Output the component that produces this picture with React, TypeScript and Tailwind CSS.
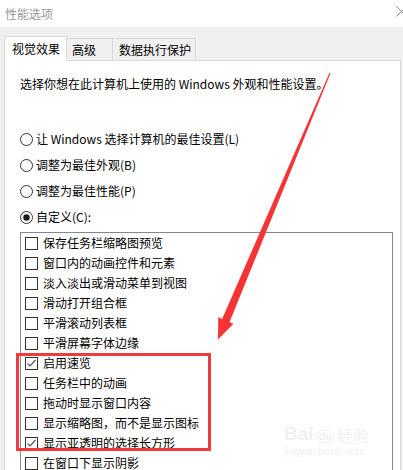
import React from "react";

const items: { label: string; checked: boolean }[] = [
  { label: "保存任务栏缩略图预览", checked: false },
  { label: "窗口内的动画控件和元素", checked: false },
  { label: "淡入淡出或滑动菜单到视图", checked: false },
  { label: "滑动打开组合框", checked: false },
  { label: "平滑滚动列表框", checked: false },
  { label: "平滑屏幕字体边缘", checked: false },
  { label: "启用速览", checked: true },
  { label: "任务栏中的动画", checked: false },
  { label: "拖动时显示窗口内容", checked: false },
  { label: "显示缩略图，而不是显示图标", checked: false },
  { label: "显示亚透明的选择长方形", checked: true },
  { label: "在窗口下显示阴影", checked: false },
];

const radios = [
  { label: "让 Windows 选择计算机的最佳设置(L)", on: false },
  { label: "调整为最佳外观(B)", on: false },
  { label: "调整为最佳性能(P)", on: false },
  { label: "自定义(C):", on: true },
];

function Radio({ on }: { on: boolean }) {
  return (
    <svg width="13" height="13" viewBox="0 0 13 13" className="shrink-0">
      <circle cx="6.5" cy="6.5" r="6" fill="#fff" stroke="#333" strokeWidth="1" />
      {on && <circle cx="6.5" cy="6.5" r="3.2" fill="#1a1a1a" />}
    </svg>
  );
}

function Check({ on }: { on: boolean }) {
  return (
    <svg width="13" height="13" viewBox="0 0 13 13" className="shrink-0">
      <rect x="0.5" y="0.5" width="12" height="12" fill="#fff" stroke="#333" strokeWidth="1" />
      {on && (
        <polyline points="2.5,6.5 5,9 10.5,3" fill="none" stroke="#555" strokeWidth="1.2" />
      )}
    </svg>
  );
}

export default function App() {
  return (
    <div className="relative w-[403px] h-[470px] overflow-hidden bg-white text-[12px] text-black font-['Noto_Sans_CJK_SC','Microsoft_YaHei',sans-serif] flex flex-col">
      {/* title bar */}
      <div className="h-[27px] shrink-0 flex items-center pl-[5px] text-[#9a9a9a] leading-none">
        性能选项
      </div>
      <svg className="absolute left-[396px] top-[6px]" width="11" height="11" viewBox="0 0 11 11">
        <line x1="0.5" y1="0.5" x2="10.5" y2="10.5" stroke="#888" strokeWidth="1" />
        <line x1="10.5" y1="0.5" x2="0.5" y2="10.5" stroke="#888" strokeWidth="1" />
      </svg>

      {/* body */}
      <div className="flex-1 bg-[#f0f0f0] pl-[4px] pr-[2px] flex flex-col">
        {/* tabs */}
        <div className="h-[33px] shrink-0 flex items-end">
          <div className="relative z-10 -mb-px w-[63px] h-[25px] bg-white border border-b-0 border-[#d9d9d9] flex items-center pl-[7px] leading-none">
            视觉效果
          </div>
          <div className="w-[46px] h-[22px] border-t border-r border-[#d9d9d9] flex items-center pl-[5px] leading-none">
            高级
          </div>
          <div className="w-[83px] h-[22px] border-t border-r border-[#d9d9d9] flex items-center pl-[6px] leading-none">
            数据执行保护
          </div>
        </div>
        {/* panel */}
        <div className="flex-1 bg-white border border-b-0 border-[#d9d9d9] pl-[15px] flex flex-col">
          <div className="mt-[15px] h-[16px] leading-[16px] whitespace-nowrap">
            选择你想在此计算机上使用的 Windows 外观和性能设置。
          </div>
          <div className="mt-[34px] flex flex-col">
            {radios.map((r) => (
              <div key={r.label} className="h-[26px] flex items-center gap-[3px] whitespace-nowrap">
                <Radio on={r.on} />
                <span className="leading-none">{r.label}</span>
              </div>
            ))}
          </div>
          <div className="mt-[2px] w-[373px] border border-b-0 border-[#828790] flex-1 pl-[4px] flex flex-col">
            {items.map((it) => (
              <div key={it.label} className="h-[20px] shrink-0 flex items-center gap-[5px] whitespace-nowrap">
                <Check on={it.checked} />
                <span className="leading-none">{it.label}</span>
              </div>
            ))}
          </div>
        </div>
      </div>

      {/* watermark */}
      <div className="absolute left-[284px] top-[424px] flex flex-col items-start text-[#f1f1f1] leading-none select-none">
        <div className="flex items-end gap-[2px] font-['Liberation_Sans',sans-serif]">
          <span className="text-[19px] font-bold">Bai</span>
          <span className="text-[11px] font-bold border border-[#f1f1f1] rounded-full px-[2px]">du</span>
          <span className="text-[16px] font-['Noto_Sans_CJK_SC',sans-serif]">经验</span>
        </div>
        <div className="mt-[4px] text-[10px] font-['Liberation_Sans',sans-serif]">jingyan.baidu.com</div>
      </div>

      {/* red highlight box */}
      <div className="absolute left-[16px] top-[353px] w-[195px] h-[98px] border-[3px] border-[#f23a3c]" />

      {/* red arrow */}
      <svg className="absolute left-0 top-0 pointer-events-none" width="403" height="470" viewBox="0 0 403 470">
        <polygon
          points="329.5,72.8 330.5,73.2 229.5,322.2 233.5,323.8 218,339.5 218.2,317.2 222.1,319.0"
          fill="#f53535"
        />
      </svg>
    </div>
  );
}
